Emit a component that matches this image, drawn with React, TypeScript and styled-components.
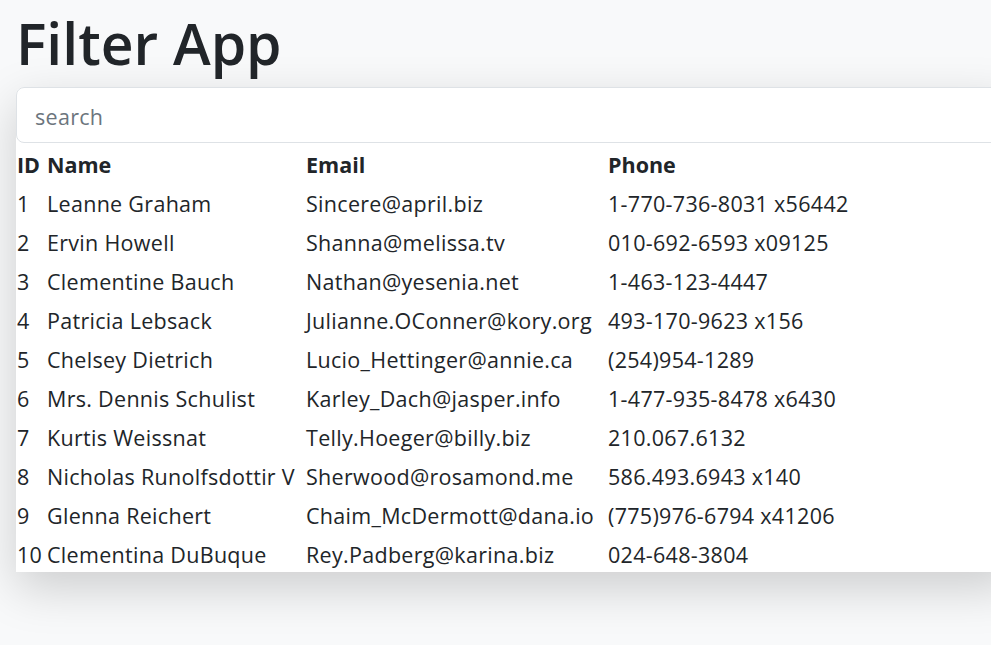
import React, { useState } from 'react';
import styled, { createGlobalStyle } from 'styled-components';

const GlobalStyle = createGlobalStyle`
  html, body {
    margin: 0;
    padding: 0;
    background: #ffffff;
    overflow-x: hidden;
  }
  body {
    font-family: 'Open Sans', 'Noto Sans', sans-serif;
    color: #212529;
  }
`;

type User = { id: number; name: string; email: string; phone: string };

const users: User[] = [
  { id: 1, name: 'Leanne Graham', email: 'Sincere@april.biz', phone: '1-770-736-8031 x56442' },
  { id: 2, name: 'Ervin Howell', email: 'Shanna@melissa.tv', phone: '010-692-6593 x09125' },
  { id: 3, name: 'Clementine Bauch', email: 'Nathan@yesenia.net', phone: '1-463-123-4447' },
  { id: 4, name: 'Patricia Lebsack', email: 'Julianne.OConner@kory.org', phone: '493-170-9623 x156' },
  { id: 5, name: 'Chelsey Dietrich', email: 'Lucio_Hettinger@annie.ca', phone: '(254)954-1289' },
  { id: 6, name: 'Mrs. Dennis Schulist', email: 'Karley_Dach@jasper.info', phone: '1-477-935-8478 x6430' },
  { id: 7, name: 'Kurtis Weissnat', email: 'Telly.Hoeger@billy.biz', phone: '210.067.6132' },
  { id: 8, name: 'Nicholas Runolfsdottir V', email: 'Sherwood@rosamond.me', phone: '586.493.6943 x140' },
  { id: 9, name: 'Glenna Reichert', email: 'Chaim_McDermott@dana.io', phone: '(775)976-6794 x41206' },
  { id: 10, name: 'Clementina DuBuque', email: 'Rey.Padberg@karina.biz', phone: '024-648-3804' },
];

const Page = styled.div`
  background: #f8f9fa;
  padding: 7px 0 73px 16px;
`;

const Title = styled.h1`
  margin: 0 0 8px 0;
  font-size: 57px;
  line-height: 72px;
  font-weight: 600;
  color: #212529;
`;

const Card = styled.div`
  width: calc(100% + 24px);
  background: #ffffff;
  border-radius: 8px 0 0 0;
  box-shadow: 0 16px 48px rgba(0, 0, 0, 0.175);
`;

const SearchInput = styled.input`
  display: block;
  box-sizing: border-box;
  width: 100%;
  height: 56px;
  padding: 2px 18px 0;
  font-family: inherit;
  font-size: 21.5px;
  letter-spacing: 0.3px;
  color: #212529;
  background: #ffffff;
  border: 1px solid #dee2e6;
  border-radius: 8px;
  outline: none;
  &::placeholder {
    color: #6c757d;
  }
`;

const Table = styled.table`
  border-collapse: collapse;
  font-size: 21.5px;
  letter-spacing: 0.3px;
  color: #212529;
`;

const Th = styled.th<{ $w?: number }>`
  box-sizing: border-box;
  text-align: left;
  font-weight: 700;
  height: 39px;
  padding: 3px 0 0 1px;
  white-space: nowrap;
  letter-spacing: 0;
  width: ${p => (p.$w ? `${p.$w}px` : 'auto')};
`;

const Td = styled.td`
  box-sizing: border-box;
  height: 39px;
  padding: 3px 0 0 1px;
  white-space: nowrap;
`;

export default function App() {
  const [query, setQuery] = useState('');
  const filtered = users.filter(u =>
    u.name.toLowerCase().includes(query.toLowerCase())
  );

  return (
    <>
      <GlobalStyle />
      <Page>
        <Title>Filter App</Title>
        <Card>
          <SearchInput
            placeholder="search"
            value={query}
            onChange={e => setQuery(e.target.value)}
          />
          <Table>
            <thead>
              <tr>
                <Th $w={30}>ID</Th>
                <Th $w={259}>Name</Th>
                <Th $w={302}>Email</Th>
                <Th>Phone</Th>
              </tr>
            </thead>
            <tbody>
              {filtered.map(u => (
                <tr key={u.id}>
                  <Td>{u.id}</Td>
                  <Td>{u.name}</Td>
                  <Td>{u.email}</Td>
                  <Td>{u.phone}</Td>
                </tr>
              ))}
            </tbody>
          </Table>
        </Card>
      </Page>
    </>
  );
}
